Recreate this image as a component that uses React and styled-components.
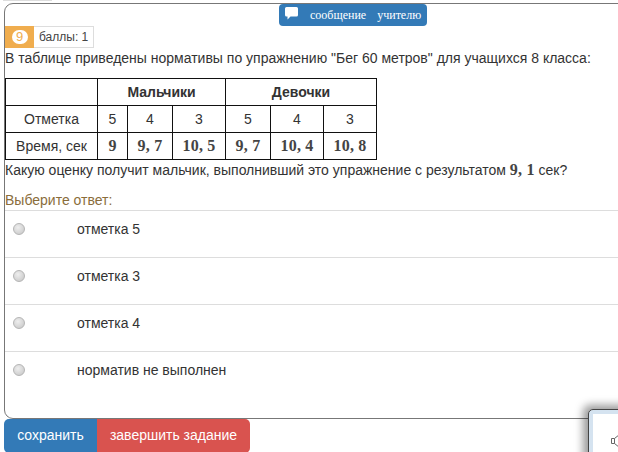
import React from "react";
import styled, { createGlobalStyle } from "styled-components";

const Global = createGlobalStyle`
  html, body { margin: 0; padding: 0; background: #fff; overflow: hidden; }
  body { font-family: "Liberation Sans", Arial, sans-serif; font-size: 14px; line-height: 20px; color: #333; }
`;
const Page = styled.div`
  position: relative;
  width: 618px;
  height: 452px;
  overflow: hidden;
  padding: 3px 0 0 4px;
  box-sizing: border-box;
`;
const TopTab = styled.div`
  position: absolute;
  left: 3px;
  top: -20px;
  width: 49px;
  height: 21px;
  border: 1px solid #ddd;
  box-sizing: border-box;
`;
const Card = styled.div`
  width: 640px;
  height: 416px;
  box-sizing: border-box;
  border: 1px solid #777;
  border-radius: 9px;
  display: flex;
  flex-direction: column;
`;
const MessageRow = styled.div`
  display: flex;
  padding-left: 274px;
  height: 22px;
`;
const MessageButton = styled.div`
  width: 148px;
  height: 22px;
  box-sizing: border-box;
  background: #337ab7;
  border-radius: 4px;
  color: #fff;
  display: flex;
  align-items: center;
  padding-left: 6px;
  font-family: "Liberation Serif", serif;
  font-size: 12px;
  word-spacing: 8px;
  white-space: nowrap;
`;
const BubbleIcon = styled.svg`
  width: 13px;
  height: 13px;
  margin: -4px 12px 0 0;
  flex: none;
`;
const ScoreRow = styled.div`
  display: flex;
  height: 22px;
`;
const ScoreBadge = styled.div`
  width: 29px;
  background: #f0ad4e;
  display: flex;
  align-items: center;
  justify-content: center;
`;
const ScoreCircle = styled.span`
  width: 16px;
  height: 14px;
  border-radius: 7px;
  background: #fff;
  color: #f0ad4e;
  font-size: 13px;
  line-height: 14px;
  text-align: center;
`;
const ScoreLabel = styled.div`
  width: 60px;
  box-sizing: border-box;
  border: 1px solid #ddd;
  border-left: 0;
  font-size: 12px;
  line-height: 20px;
  padding-left: 5px;
  color: #444;
`;
const Content = styled.div`
  white-space: nowrap;
`;
const Line = styled.p`
  margin: 0;
  height: 20px;
`;
const GradeTable = styled.table`
  border-collapse: collapse;
  width: 371px;
  height: 81px;
  margin-top: 10px;
  table-layout: fixed;
  & td, & th { border: 1px solid #111; text-align: center; padding: 0; height: 26px; }
  & th { font-weight: bold; }
`;
const Math = styled.span`
  font-family: "Liberation Serif", serif;
  font-weight: bold;
  font-size: 16px;
  letter-spacing: 0.2px;
  color: #444;
`;
const Prompt = styled.div`
  margin-top: 10px;
  height: 20px;
  color: #8a6d3b;
`;
const Answer = styled.div`
  border-top: 1px solid #ddd;
  display: flex;
  padding-top: 8px;
  height: 38px;
`;
const Radio = styled.span`
  width: 12px;
  height: 12px;
  border-radius: 50%;
  margin: 4px 0 0 8px;
  border: 1px solid #b5b5b5;
  box-sizing: border-box;
  background: radial-gradient(circle at 40% 35%, #eee, #c4c4c4);
  flex: none;
`;
const AnswerText = styled.span`
  margin-left: 52px;
`;
const Actions = styled.div`
  display: flex;
`;
const SaveButton = styled.div`
  width: 93px;
  height: 34px;
  background: #337ab7;
  color: #fff;
  border-radius: 5px 0 0 5px;
  text-align: center;
  line-height: 33px;
`;
const FinishButton = styled.div`
  width: 153px;
  height: 34px;
  background: #d9534f;
  color: #fff;
  border-radius: 0 5px 5px 0;
  text-align: center;
  line-height: 33px;
`;
const DesktopWindow = styled.div`
  position: absolute;
  left: 588px;
  top: 409px;
  width: 60px;
  height: 60px;
  box-sizing: border-box;
  background: #fff;
  border: 1px solid #444;
  border-radius: 5px 0 0 0;
  box-shadow: -3px -2px 9px 2px rgba(0,0,0,.4), inset 0 0 0 4px #d5e3f0;
`;
const Speaker = styled.svg`
  position: absolute;
  left: 22px;
  top: 24px;
  width: 10px;
  height: 14px;
`;

const answers = ["отметка 5", "отметка 3", "отметка 4", "норматив не выполнен"];

export default function App() {
  return (
    <Page>
      <Global />
      <TopTab />
      <Card>
        <MessageRow>
          <MessageButton>
            <BubbleIcon viewBox="0 0 13 13"><path fill="#fff" d="M1.5 0h10A1.5 1.5 0 0 1 13 1.500v6.500A1.500 1.500 0 0 1 11.500 9.500H5.500L2.500 12.500V9.500H1.500A1.500 1.500 0 0 1 0 8V1.500A1.500 1.500 0 0 1 1.500 0z"/></BubbleIcon>
            сообщение учителю
          </MessageButton>
        </MessageRow>
        <ScoreRow>
          <ScoreBadge><ScoreCircle>9</ScoreCircle></ScoreBadge>
          <ScoreLabel>баллы: 1</ScoreLabel>
        </ScoreRow>
        <Content>
          <Line>В таблице приведены нормативы по упражнению "Бег 60 метров" для учащихся 8 класса:</Line>
          <GradeTable>
            <colgroup>
              <col width="92" /><col width="30" /><col width="45" /><col width="53" /><col width="45" /><col width="53" /><col width="53" />
            </colgroup>
            <tbody>
              <tr><th></th><th colSpan={3}>Мальчики</th><th colSpan={3}>Девочки</th></tr>
              <tr><td>Отметка</td><td>5</td><td>4</td><td>3</td><td>5</td><td>4</td><td>3</td></tr>
              <tr><td>Время, сек</td><td><Math>9</Math></td><td><Math>9, 7</Math></td><td><Math>10, 5</Math></td><td><Math>9, 7</Math></td><td><Math>10, 4</Math></td><td><Math>10, 8</Math></td></tr>
            </tbody>
          </GradeTable>
          <Line>Какую оценку получит мальчик, выполнивший это упражнение с результатом <Math>9, 1</Math> сек?</Line>
          <Prompt>Выберите ответ:</Prompt>
        </Content>
        {answers.map((a) => (
          <Answer key={a}><Radio /><AnswerText>{a}</AnswerText></Answer>
        ))}
      </Card>
      <Actions>
        <SaveButton>сохранить</SaveButton>
        <FinishButton>завершить задание</FinishButton>
      </Actions>
      <DesktopWindow>
        <Speaker viewBox="0 0 10 14"><path fill="none" stroke="#666" d="M.5 4.500h3v5h-3zM3.500 4.500l5-4M3.500 9.500l5 4"/></Speaker>
      </DesktopWindow>
    </Page>
  );
}
